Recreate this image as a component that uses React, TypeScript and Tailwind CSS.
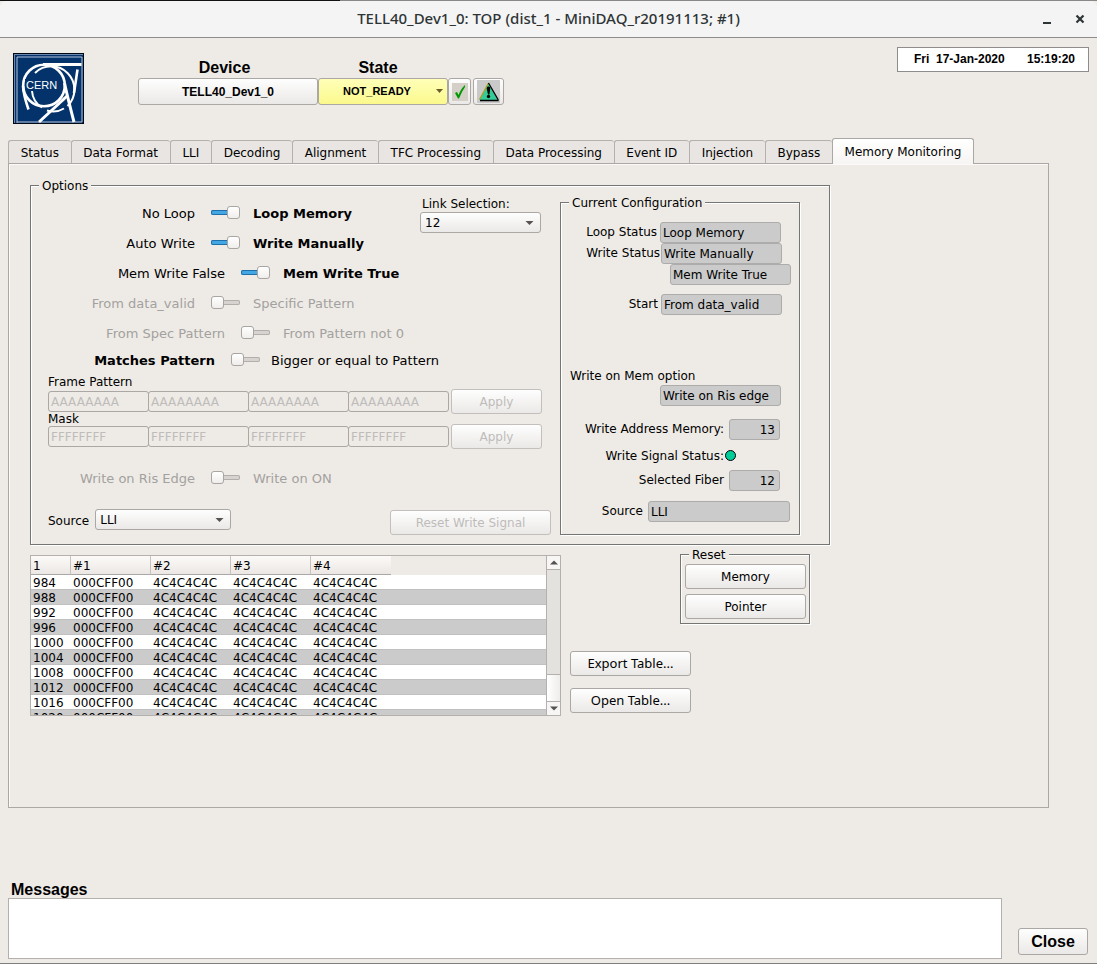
import React, { useId, useState } from 'react';

const tabs = [
  'Status',
  'Data Format',
  'LLI',
  'Decoding',
  'Alignment',
  'TFC Processing',
  'Data Processing',
  'Event ID',
  'Injection',
  'Bypass',
  'Memory Monitoring',
];

const rows = ['984', '988', '992', '996', '1000', '1004', '1008', '1012', '1016', '1020'];

const buttonLook =
  'rounded-[3px] border border-[#aaa7a4] bg-linear-to-b from-[#fefefe] to-[#ebe9e7] text-center text-black disabled:border-[#c2bfbc] disabled:text-[#bebcba]';

const groupLook =
  'min-w-0 border border-[#757573] shadow-[1px_1px_0_#fff,inset_1px_1px_0_#fff]';

function Legend({ children }: { children: React.ReactNode }) {
  return <legend className="ml-2 bg-[#eeebe6] px-[3px] pt-0.5 leading-3">{children}</legend>;
}

type SwitchRowProps = {
  left: string;
  right: string;
  on?: boolean;
  disabled?: boolean;
  leftClass: string;
  rightClass?: string;
  height?: string;
  bold?: 'left' | 'right';
};

function SwitchRow({
  left,
  right,
  on = false,
  disabled = false,
  leftClass,
  rightClass = 'ml-[13px]',
  height = 'h-[30px]',
  bold,
}: SwitchRowProps) {
  const id = useId();
  return (
    <div
      className={`flex items-center text-[13px] leading-4 whitespace-nowrap ${height} ${
        disabled ? 'text-[#a3a19f]' : 'text-black'
      }`}
    >
      <label htmlFor={id} className={`pt-0.5 text-right ${leftClass} ${bold === 'left' ? 'font-bold' : ''}`}>
        {left}
      </label>
      <input
        id={id}
        type="range"
        min={0}
        max={1}
        defaultValue={on ? 1 : 0}
        disabled={disabled}
        className={`mb-px ml-4 h-[13px] w-[29px] appearance-none bg-transparent [&::-webkit-slider-runnable-track]:h-[5px] [&::-webkit-slider-runnable-track]:rounded-[2px] [&::-webkit-slider-thumb]:-mt-1 [&::-webkit-slider-thumb]:h-[13px] [&::-webkit-slider-thumb]:w-[13px] [&::-webkit-slider-thumb]:appearance-none [&::-webkit-slider-thumb]:rounded-[3px] [&::-webkit-slider-thumb]:border [&::-webkit-slider-thumb]:border-[#a8a5a2] [&::-webkit-slider-thumb]:bg-linear-to-b [&::-webkit-slider-thumb]:from-white [&::-webkit-slider-thumb]:to-[#f0eeec] ${
          on
            ? '[&::-webkit-slider-runnable-track]:bg-[#43a7e6] [&::-webkit-slider-runnable-track]:shadow-[inset_0_0_0_1px_#1f6fa8]'
            : '[&::-webkit-slider-runnable-track]:bg-[#d6d3d0] [&::-webkit-slider-runnable-track]:shadow-[inset_0_0_0_1px_#b1aeab]'
        }`}
      />
      <span className={`pt-0.5 ${rightClass} ${bold === 'right' ? 'font-bold' : ''}`}>{right}</span>
    </div>
  );
}

function Combo({ id, value, options, width }: { id: string; value: string; options: string[]; width: string }) {
  return (
    <div className={`relative h-[21px] ${width}`}>
      <select
        id={id}
        defaultValue={value}
        className="block h-full w-full appearance-none rounded-[3px] border border-[#aaa7a4] bg-linear-to-b from-[#fefefe] to-[#ebe9e7] pl-1 leading-[14px] text-black"
      >
        {options.map((o) => (
          <option key={o}>{o}</option>
        ))}
      </select>
      <svg className="pointer-events-none absolute top-[9px] right-[7px]" width="9" height="5" viewBox="0 0 9 5" aria-hidden="true">
        <path d="M0.5 0H8.5L4.5 4Z" fill="#555250" />
      </svg>
    </div>
  );
}

function StatusField({
  label,
  value,
  width = 'w-[121px]',
  rowClass = 'pr-[18px]',
  gap = 'gap-[3px]',
  align = 'text-left pl-0.5',
  hideLabel = false,
}: {
  label: string;
  value: string;
  width?: string;
  rowClass?: string;
  gap?: string;
  align?: string;
  hideLabel?: boolean;
}) {
  const id = useId();
  return (
    <div className={`flex items-center justify-end ${gap} ${rowClass}`}>
      {!hideLabel && (
        <label htmlFor={id} className="pb-0.5 leading-[14px] whitespace-nowrap">
          {label}
        </label>
      )}
      <input
        id={id}
        aria-label={hideLabel ? label : undefined}
        readOnly
        value={value}
        className={`h-[21px] rounded-[3px] border border-[#aeacaa] bg-[#cbcbcb] ${width} ${align}`}
      />
    </div>
  );
}

function PatternRow({ name, value }: { name: string; value: string }) {
  return (
    <div className="flex h-[21px] items-center">
      {[0, 1, 2, 3].map((i) => (
        <input
          key={i}
          aria-label={`${name} word ${i + 1}`}
          disabled
          defaultValue={value}
          className="-mr-px h-[21px] w-[101px] rounded-[3px] border border-[#aaa7a4] bg-transparent pl-0.5 text-[#bebcba]"
        />
      ))}
      <button disabled className={`ml-[3px] h-[25px] w-[91px] shrink-0 ${buttonLook}`}>
        Apply
      </button>
    </div>
  );
}

function CernLogo() {
  return (
    <svg width="71" height="71" viewBox="0 0 71 71" role="img" aria-label="CERN" className="shrink-0">
      <rect width="71" height="71" fill="#000814" />
      <rect x="1" y="1" width="69" height="69" fill="#6f86ad" />
      <rect x="2" y="2" width="68" height="68" fill="#04336b" />
      <path d="M4 70V4H69V69H4" fill="none" stroke="#b4c3dc" strokeWidth="1" />
      <g fill="none" stroke="#fff">
        <path d="M22 20A21 21 0 0 1 54.500 53M51 55.500A21 21 0 0 1 34 57.500M29 54.500A21 21 0 0 1 19 38" strokeWidth="2" />
        <circle cx="31" cy="32.500" r="20.800" strokeWidth="2.600" />
        <path d="M30 11.500H68.500" strokeWidth="2.800" />
        <path d="M64.500 16.500L61 40" strokeWidth="2.600" />
        <path d="M54 43Q50 47 26 69" strokeWidth="2.800" />
        <path d="M51.500 30Q54 42 61 69" strokeWidth="3" />
        <path d="M10 33Q10.500 42 15.500 56.500" strokeWidth="2.600" />
      </g>
      <rect x="12" y="26" width="34" height="11" fill="#04336b" />
      <text
        x="13"
        y="36"
        fill="#fff"
        fontSize="11"
        fontWeight="400"
        fontFamily="'Liberation Sans', sans-serif"
      >
        CERN
      </text>
    </svg>
  );
}

function ScrollArrow({ down = false }: { down?: boolean }) {
  return (
    <svg width="8" height="5" viewBox="0 0 8 5" aria-hidden="true">
      <path d={down ? 'M0 0.500H8L4 4.500Z' : 'M0 4.500H8L4 0.500Z'} fill="#555250" />
    </svg>
  );
}

function MemoryTable() {
  return (
    <div className="mt-2 flex h-[161px] w-[531px] shrink-0 border border-[#b3b0ad]">
      <div className="min-w-0 flex-1 overflow-hidden bg-white">
        <table className="w-full table-fixed border-separate border-spacing-0 text-left">
          <thead>
            <tr className="h-[19px]">
              {['1', '#1', '#2', '#3', '#4'].map((h, i) => (
                <th
                  key={h}
                  className={`border-b border-b-[#aaa7a4] bg-linear-to-b from-[#fcfaf8] to-[#ebe7e4] p-0 pt-0.5 pl-0.5 leading-4 font-normal ${
                    i === 0 ? 'w-10' : 'w-20'
                  } ${i < 4 ? 'border-r border-r-[#c4c1be]' : ''}`}
                >
                  {h}
                </th>
              ))}
              <td className="bg-[#eeebe6] p-0" />
            </tr>
          </thead>
          <tbody>
            {rows.map((r, i) => (
              <tr key={r} className={i % 2 ? 'bg-[#cbcbcb]' : 'bg-white'}>
                {[r, '000CFF00', '4C4C4C4C', '4C4C4C4C', '4C4C4C4C', ''].map((v, j) => (
                  <td key={j} className="h-[15px] border-b border-[#c0c0c0] p-0 pt-0.5 pl-0.5 leading-3">
                    {v}
                  </td>
                ))}
              </tr>
            ))}
          </tbody>
        </table>
      </div>
      <div className="flex w-[14px] flex-col border-l border-[#b3b0ad] bg-[#e3e2de]">
        <button aria-label="Scroll up" className="flex h-[14px] items-center justify-center border-b border-[#b3b0ad] bg-[#f7f6f5]">
          <ScrollArrow />
        </button>
        <div className="flex-1" />
        <div className="h-[27px] border-t border-[#b3b0ad] bg-linear-to-r from-white to-[#efedeb]" />
        <button aria-label="Scroll down" className="flex h-[14px] items-center justify-center border-t border-[#b3b0ad] bg-[#f7f6f5]">
          <ScrollArrow down />
        </button>
      </div>
    </div>
  );
}

function CurrentConfiguration() {
  return (
    <fieldset className={`mt-[3px] mr-[29px] mb-[9px] w-60 shrink-0 pb-3 ${groupLook}`}>
      <Legend>Current Configuration</Legend>
      <div className="pt-[13px]">
        <StatusField label="Loop Status" value="Loop Memory" />
        <StatusField label="Write Status" value="Write Manually" gap="gap-px" rowClass="pr-[17px]" />
        <StatusField label="Mem Write" value="Mem Write True" rowClass="pr-2" hideLabel />
        <StatusField label="Start" value="From data_valid" rowClass="mt-[9px] pr-[17px]" />
        <div className="mt-[54px] mb-0.5 pl-[9px] leading-[14px]">Write on Mem option</div>
        <StatusField label="Write on Mem option" value="Write on Ris edge" hideLabel />
        <StatusField
          label="Write Address Memory:"
          value="13"
          width="w-[51px]"
          gap="gap-[5px]"
          align="text-right pr-1"
          rowClass="mt-[13px] pr-[19px]"
        />
        <div className="mt-2 flex h-[14px] items-center justify-end pr-[63px]">
          <span className="pt-0.5 leading-[14px]">Write Signal Status:</span>
          <span className="ml-px h-[11px] w-[11px] rounded-full border border-black bg-[#00cc99]" />
        </div>
        <StatusField
          label="Selected Fiber"
          value="12"
          width="w-[51px]"
          gap="gap-[5px]"
          align="text-right pr-1"
          rowClass="mt-2 pr-[19px]"
        />
        <StatusField label="Source" value="LLI" width="w-[142px]" gap="gap-[5px]" rowClass="mt-[10px] pr-[9px]" />
      </div>
    </fieldset>
  );
}

function Options() {
  return (
    <fieldset className={`w-full max-w-[800px] ${groupLook}`}>
      <Legend>Options</Legend>
      <div className="flex">
        <div className="min-w-0 flex-1 pt-1.5 pb-[9px]">
          <div className="flex">
            <div className="w-[389px] shrink-0">
              <SwitchRow left="No Loop" right="Loop Memory" on bold="right" leftClass="w-[164px]" />
              <SwitchRow left="Auto Write" right="Write Manually" on bold="right" leftClass="w-[164px]" />
              <SwitchRow left="Mem Write False" right="Mem Write True" on bold="right" leftClass="w-[194px]" />
              <SwitchRow left="From data_valid" right="Specific Pattern" disabled leftClass="w-[164px]" />
              <SwitchRow left="From Spec Pattern" right="From Pattern not 0" disabled leftClass="w-[194px]" />
            </div>
            <div>
              <label htmlFor="link" className="block pb-0.5 pl-0.5 leading-3">
                Link Selection:
              </label>
              <Combo id="link" value="12" options={['12', '13', '14']} width="w-[121px]" />
            </div>
          </div>
          <SwitchRow
            left="Matches Pattern"
            right="Bigger or equal to Pattern"
            bold="left"
            height="h-6"
            leftClass="w-[184px]"
            rightClass="ml-[11px]"
          />
          <div className="pl-[17px]">
            <div className="mt-[3px] mb-0.5 leading-[14px]">Frame Pattern</div>
            <PatternRow name="Frame Pattern" value="AAAAAAAA" />
            <div className="leading-[14px]">Mask</div>
            <PatternRow name="Mask" value="FFFFFFFF" />
          </div>
          <div className="mt-4">
            <SwitchRow left="Write on Ris Edge" right="Write on ON" disabled leftClass="w-[164px]" />
          </div>
          <div className="mt-4 flex items-start pl-[17px]">
            <label htmlFor="source" className="mr-1.5 leading-6">
              Source
            </label>
            <Combo id="source" value="LLI" options={['LLI', 'TFC']} width="w-[136px]" />
            <button disabled className={`mt-px mr-[9px] ml-auto h-[25px] w-[161px] ${buttonLook}`}>
              Reset Write Signal
            </button>
          </div>
        </div>
        <CurrentConfiguration />
      </div>
    </fieldset>
  );
}

export default function App() {
  const [active, setActive] = useState('Memory Monitoring');

  return (
    <div className="flex min-h-screen flex-col border-b border-[#807e7c] bg-[#eeebe6] font-['DejaVu_Sans',sans-serif] text-[12px] text-black">
      <div className="h-px bg-linear-to-r from-[#111] from-31% to-[#8a8886] to-31%" />
      <header className="relative flex h-[37px] items-center justify-center rounded-t-md border-b border-[#8f8d8b] bg-[#f4f4f4] font-['Noto_Sans',sans-serif] text-[15px] font-medium text-[#2e3436]">
        <h1 className="pb-0.5">TELL40_Dev1_0: TOP (dist_1 - MiniDAQ_r20191113; #1)</h1>
        <div className="absolute inset-y-0 right-3 flex items-center gap-6">
          <button aria-label="Minimize" className="flex h-3 w-2 items-end">
            <span className="mb-px h-0.5 w-2 bg-[#2e3436]" />
          </button>
          <button aria-label="Close window">
            <svg width="10" height="10" viewBox="0 0 10 10" aria-hidden="true">
              <path d="M1.500 1.500L8.500 8.500M8.500 1.500L1.500 8.500" stroke="#2e3436" strokeWidth="2.200" />
            </svg>
          </button>
        </div>
      </header>

      <section className="flex h-[100px] items-start pt-[9px] pr-2 pl-[13px] font-['Liberation_Sans',sans-serif] font-bold">
        <div className="pt-1.5">
          <CernLogo />
        </div>
        <div className="ml-[54px] flex pt-[11px]">
          <div>
            <div className="w-[173px] text-center text-[16px] leading-5">Device</div>
            <button className={`block h-[27px] w-[180px] ${buttonLook}`}>TELL40_Dev1_0</button>
          </div>
          <div>
            <div className="w-[120px] text-center text-[16px] leading-5">State</div>
            <button className="relative block h-[27px] w-[130px] rounded-[3px] border border-[#aaa7a4] bg-linear-to-b from-[#ffffb8] to-[#fbf98c] pr-3 text-[11px]">
              NOT_READY
              <svg className="absolute top-[10px] right-1" width="7" height="4" viewBox="0 0 7 4" aria-hidden="true">
                <path d="M0 0H7L3.500 4Z" fill="#6b5c28" />
              </svg>
            </button>
          </div>
          <button aria-label="State OK" className={`mt-5 flex h-[27px] w-[23px] items-center justify-center ${buttonLook}`}>
            <svg width="16" height="18" viewBox="0 0 16 18" aria-hidden="true">
              <rect width="16" height="18" fill="#d4d0c8" />
              <path d="M3 10L5 9L6.500 12Q9 5.500 13 2L13 4Q9.500 9 7 15.500H6Z" fill="#009900" />
            </svg>
          </button>
          <button aria-label="Alerts" className={`mt-5 ml-0.5 flex h-[27px] w-[31px] items-center justify-center ${buttonLook}`}>
            <svg width="23" height="23" viewBox="0 0 23 23" aria-hidden="true">
              <rect width="23" height="23" fill="#c9c9c9" />
              <path d="M11.500 3L20.500 20H2.500Z" fill="#33cc99" />
              <path d="M11.500 3L2.500 19.500" stroke="#b39a1a" strokeWidth="1.200" />
              <path d="M11.500 3L21 19.500V20.500H3" fill="none" stroke="#000" strokeWidth="1.300" />
              <path d="M11.500 6.500C13.500 6.500 13.500 8.500 13 10L12.500 14.500H11L10 10C9.500 8.500 9.500 6.500 11.500 6.500Z" fill="#000" />
              <circle cx="11.500" cy="16.500" r="1.700" fill="#000" />
            </svg>
          </button>
        </div>
        <div className="ml-auto flex h-[25px] w-48 items-center justify-between border border-[#8f8d8b] bg-white pr-[13px] pb-0.5 pl-4">
          <span className="whitespace-pre">Fri  17-Jan-2020</span>
          <span>15:19:20</span>
        </div>
      </section>

      <nav role="tablist" className="ml-2 flex h-[26px] w-[966px] items-end">
        {tabs.map((t) => (
          <button
            key={t}
            role="tab"
            aria-selected={t === active}
            onClick={() => setActive(t)}
            className={
              t === active
                ? 'relative z-10 h-[26px] flex-auto rounded-t-[3px] border border-b-0 border-[#aaa7a4] bg-linear-to-b from-white to-[#f7f5f3] px-[11px] whitespace-nowrap'
                : 'mb-px h-[23px] flex-auto rounded-t-[3px] border border-r-0 border-b-0 border-[#b3b0ad] bg-[#e9e5e2] px-[11px] pt-0.5 whitespace-nowrap'
            }
          >
            {t}
          </button>
        ))}
      </nav>

      <main className="-mt-px mr-12 ml-2 flex-1 border border-[#aaa7a4] pt-[14px] pl-[21px] shadow-[inset_1px_1px_0_#fbfaf8]">
        <Options />
        <div className="mt-0.5 flex">
          <MemoryTable />
          <div className="ml-[9px]">
            <fieldset className={`ml-[110px] w-[130px] pr-[3px] pb-1 pl-1 ${groupLook}`}>
              <legend className="ml-1 bg-[#eeebe6] px-[3px] pt-0.5 leading-3">Reset</legend>
              <div className="flex flex-col gap-[5px] pt-[3px]">
                <button className={`h-[25px] ${buttonLook}`}>Memory</button>
                <button className={`h-[25px] ${buttonLook}`}>Pointer</button>
              </div>
            </fieldset>
            <div className="mt-[27px] flex w-[121px] flex-col gap-3">
              <button className={`h-[25px] font-['Noto_Sans',sans-serif] text-[13px] ${buttonLook}`}>Export Table...</button>
              <button className={`h-[25px] font-['Noto_Sans',sans-serif] text-[13px] ${buttonLook}`}>Open Table...</button>
            </div>
          </div>
        </div>
      </main>

      <footer className="mt-[72px] flex items-end gap-4 pr-[9px] pb-1 pl-2 font-['Liberation_Sans',sans-serif] text-[16px] font-bold">
        <div className="flex-1">
          <label htmlFor="messages" className="block pt-0.5 pl-[3px] leading-4">
            Messages
          </label>
          <textarea id="messages" readOnly className="block h-[61px] w-full resize-none border border-[#b3b0ad] bg-white" />
        </div>
        <button className={`mb-1 h-[27px] w-[70px] ${buttonLook}`}>Close</button>
      </footer>
    </div>
  );
}
